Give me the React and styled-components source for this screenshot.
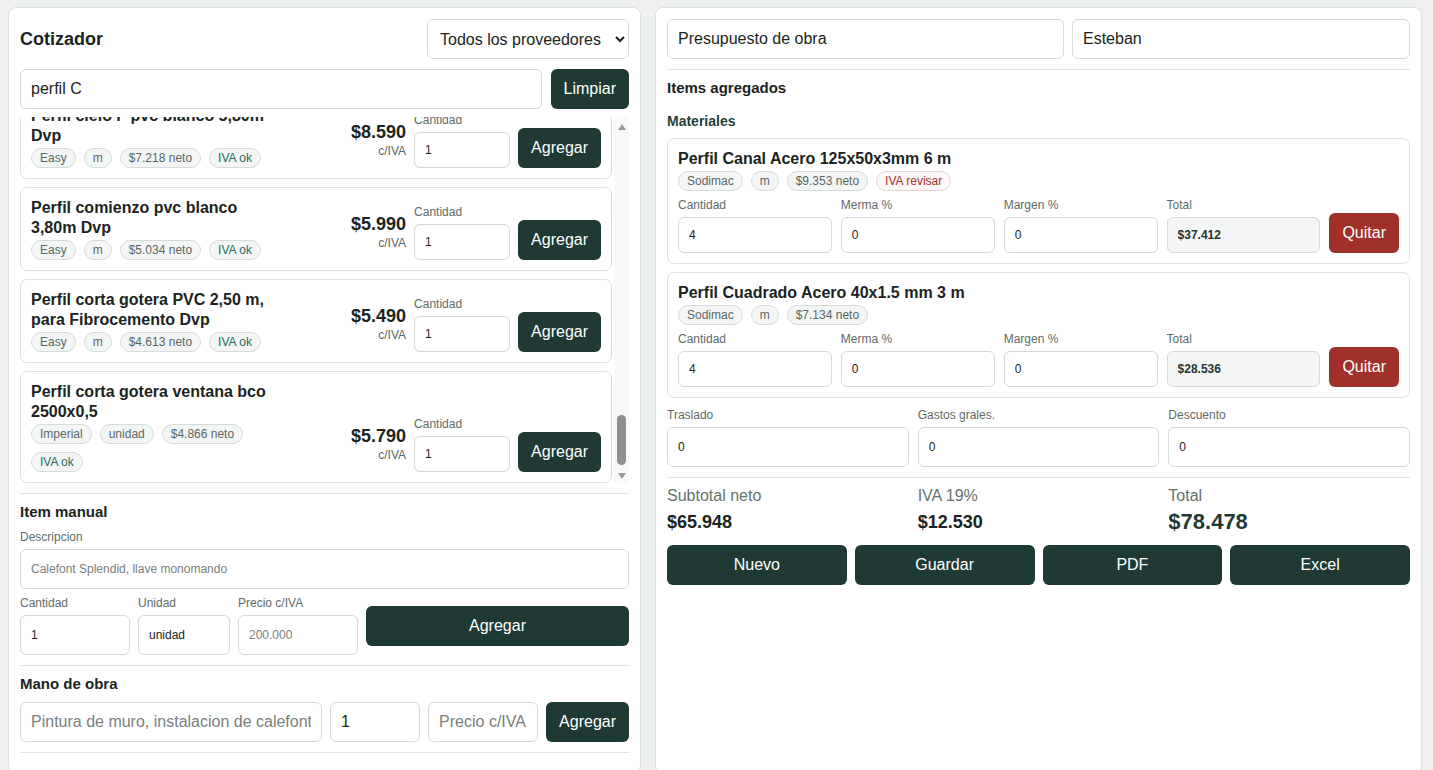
import React, { useLayoutEffect, useRef } from 'react';
import styled, { createGlobalStyle } from 'styled-components';

const GlobalStyle = createGlobalStyle`
  * {
    box-sizing: border-box;
  }
  body {
    margin: 0;
    background: #eef1ef;
    font-family: "Liberation Sans", Arial, sans-serif;
    color: #1b2421;
  }
`;

const Page = styled.div`
  display: grid;
  grid-template-columns: 633px 767px;
  gap: 14px;
  padding: 7px 11px 0 8px;
`;

const Panel = styled.section`
  background: #fff;
  border: 1px solid #dce2df;
  border-radius: 8px;
  padding: 11px;
  display: flex;
  flex-direction: column;
`;

const HeaderRow = styled.div`
  display: flex;
  align-items: center;
  justify-content: space-between;
`;

const Heading = styled.h1`
  margin: 0;
  font-size: 18px;
  font-weight: bold;
  color: #1b2421;
`;

const Select = styled.select`
  width: 202px;
  height: 40px;
  padding: 0 8px;
  font-family: inherit;
  font-size: 16px;
  color: #1b2421;
  background: #fff;
  border: 1px solid #d4dad7;
  border-radius: 6px;
`;

const SearchRow = styled.div`
  display: flex;
  gap: 9px;
  margin-top: 10px;
`;

const Input = styled.input`
  width: 100%;
  height: ${p => (p.$h ? p.$h : 40)}px;
  padding: 0 10px;
  font-family: inherit;
  font-size: ${p => (p.$small ? 12 : 16)}px;
  font-weight: ${p => (p.$bold ? 'bold' : 'normal')};
  color: ${p => (p.$bold ? '#1e3530' : '#1b2421')};
  background: ${p => (p.$readonly ? '#f4f6f5' : '#fff')};
  border: 1px solid #d4dad7;
  border-radius: 6px;
  outline: none;
  &::placeholder {
    color: #7a807d;
  }
`;

const Button = styled.button`
  height: 40px;
  padding: 0 13px;
  flex-shrink: 0;
  font-family: inherit;
  font-size: 16px;
  color: #fff;
  background: ${p => (p.$danger ? '#a0302a' : '#1f3a35')};
  border: none;
  border-radius: 6px;
  cursor: pointer;
`;

const ListWrap = styled.div`
  display: flex;
  gap: 2px;
  height: 366px;
  margin-top: 8px;
`;

const ResultList = styled.div`
  flex: 1;
  min-width: 0;
  overflow-y: auto;
  scrollbar-width: none;
  display: flex;
  flex-direction: column;
  gap: 8px;
  &::-webkit-scrollbar {
    display: none;
  }
`;

const ScrollTrack = styled.div`
  width: 15px;
  flex-shrink: 0;
  display: flex;
  flex-direction: column;
  align-items: center;
  background: #f9f9f9;
`;

const ScrollArrow = styled.div`
  height: ${p => (p.$down ? 14 : 20)}px;
  display: flex;
  align-items: center;
  justify-content: center;
  &::after {
    content: '';
    width: 0;
    height: 0;
    border-left: 4.5px solid transparent;
    border-right: 4.5px solid transparent;
    ${p => (p.$down ? 'border-top' : 'border-bottom')}: 6px solid #9a9a9a;
  }
`;

const ScrollThumb = styled.div`
  margin-top: auto;
  margin-bottom: 4px;
  width: 9px;
  height: 50px;
  border-radius: 5px;
  background: #8f8f8f;
`;

const ResultCard = styled.div`
  flex-shrink: 0;
  display: flex;
  align-items: flex-end;
  gap: 8px;
  padding: 10px;
  border: 1px solid #dce2df;
  border-radius: 7px;
`;

const Info = styled.div`
  flex: 0 0 245px;
  align-self: flex-start;
`;

const ItemTitle = styled.div`
  font-size: 16px;
  font-weight: bold;
  line-height: 20px;
  color: #1b2421;
`;

const Chips = styled.div`
  display: flex;
  flex-wrap: wrap;
  gap: 8px;
  margin-top: 2px;
`;

const toneColor = { ok: '#2a6b5e', bad: '#a1322b' };

const Chip = styled.span`
  font-size: 12px;
  line-height: 18px;
  padding: 0 8px;
  border-radius: 10px;
  color: ${p => toneColor[p.$tone] || '#5b6762'};
  background: ${p => (p.$tone === 'bad' ? '#fdf8f7' : '#f3f6f4')};
  border: 1px solid ${p => (p.$tone === 'bad' ? '#e8d4d1' : '#d5dcd8')};
`;

const PriceBlock = styled.div`
  margin-left: auto;
  margin-bottom: 9px;
  text-align: right;
`;

const Price = styled.div`
  font-size: 18px;
  font-weight: bold;
  line-height: 22px;
  color: #1b2421;
`;

const PriceNote = styled.div`
  font-size: 12px;
  line-height: 16px;
  color: #5b6762;
`;

const Field = styled.div`
  display: flex;
  flex-direction: column;
  width: ${p => (p.$w ? `${p.$w}px` : 'auto')};
  min-width: 0;
`;

const Label = styled.label`
  font-size: 12px;
  line-height: 14px;
  color: #5f6b66;
  margin-bottom: 5px;
`;

const Divider = styled.hr`
  width: 100%;
  height: 1px;
  margin: 10px 0 9px;
  border: none;
  background: #dde3e0;
`;

const SectionTitle = styled.h2`
  margin: 0 0 9px;
  font-size: 15px;
  font-weight: bold;
  line-height: 18px;
  color: #1b2421;
`;

const SubTitle = styled.h3`
  margin: 6px 0 8px;
  font-size: 14px;
  font-weight: bold;
  line-height: 18px;
  color: #23413a;
`;

const ManualRow = styled.div`
  display: grid;
  grid-template-columns: 110px 92px 120px 1fr;
  gap: 8px;
  align-items: center;
  margin-top: 7px;
`;

const LaborRow = styled.div`
  display: grid;
  grid-template-columns: 1fr 90px 110px auto;
  gap: 8px;
`;

const TopInputs = styled.div`
  display: grid;
  grid-template-columns: 397px 1fr;
  gap: 8px;
`;

const AddedList = styled.div`
  display: flex;
  flex-direction: column;
  gap: 8px;
`;

const AddedCard = styled.div`
  padding: 10px;
  border: 1px solid #dce2df;
  border-radius: 7px;
`;

const AddedGrid = styled.div`
  display: grid;
  grid-template-columns: 1fr 1fr 1fr 1fr auto;
  gap: 9px;
  align-items: end;
  margin-top: 7px;
`;

const ThreeCols = styled.div`
  display: grid;
  grid-template-columns: repeat(3, 1fr);
  gap: 9px;
  margin-top: ${p => (p.$mt ? p.$mt : 0)}px;
`;

const SummaryLabel = styled.div`
  font-size: 16px;
  line-height: 18px;
  color: #66726d;
`;

const SummaryValue = styled.div`
  margin-top: 4px;
  font-size: ${p => (p.$big ? 22 : 18)}px;
  font-weight: bold;
  line-height: 26px;
  color: ${p => (p.$big ? '#1f3a35' : '#1b2421')};
`;

const Actions = styled.div`
  display: grid;
  grid-template-columns: repeat(4, 1fr);
  gap: 8px;
  margin-top: 10px;
`;

const filler = [
  ['Perfil C galvanizado 40x38x0,5mm 2,4 m', 'Easy', 'm', '$1.840', '$2.190'],
  ['Perfil C metalcon 60x38x0,85mm 3 m', 'Sodimac', 'unidad', '$3.773', '$4.490'],
  ['Perfil canal U 42x20x0,5mm 2,4 m', 'Imperial', 'unidad', '$1.503', '$1.790'],
  ['Perfil C 90x38x0,85mm 6 m galvanizado', 'Sodimac', 'unidad', '$8.395', '$9.990'],
  ['Perfil omega 35x15x0,5mm 2,4 m', 'Easy', 'm', '$1.168', '$1.390'],
  ['Perfil C 100x50x2mm 6 m acero negro', 'Imperial', 'unidad', '$14.277', '$16.990'],
  ['Perfil angulo aluminio 20x20mm 3 m', 'Easy', 'm', '$3.016', '$3.590'],
  ['Perfil C 150x50x3mm 6 m acero', 'Sodimac', 'm', '$21.840', '$25.990'],
  ['Perfil esquinero metalico 30x30mm 2,4 m', 'Imperial', 'unidad', '$1.000', '$1.190'],
  ['Perfil tapa pvc blanco 6 m Dvp', 'Easy', 'm', '$2.344', '$2.790'],
  ['Perfil H union pvc blanco 5,80m Dvp', 'Easy', 'm', '$3.352', '$3.990'],
  ['Perfil C 80x40x2mm 6 m galvanizado', 'Sodimac', 'unidad', '$11.756', '$13.990'],
  ['Perfil U aluminio 15x15mm 3 m natural', 'Imperial', 'unidad', '$2.680', '$3.190'],
  ['Perfil cuadrado acero 30x1.5 mm 6 m', 'Sodimac', 'm', '$6.714', '$7.990'],
  ['Perfil terminacion pvc blanco 3 m Dvp', 'Easy', 'm', '$1.504', '$1.790'],
  ['Perfil C galvanizado 60x38x0,5mm 2,4 m', 'Imperial', 'unidad', '$2.092', '$2.490'],
  ['Perfil rectangular acero 40x20x2mm 6 m', 'Sodimac', 'm', '$9.235', '$10.990'],
  ['Perfil J pvc blanco 3,80m Dvp', 'Easy', 'm', '$2.000', '$2.380'],
  ['Perfil cielo americano 3,05m blanco', 'Imperial', 'unidad', '$1.672', '$1.990'],
  ['Perfil C 125x50x2mm 6 m acero', 'Sodimac', 'm', '$16.798', '$19.990'],
  ['Perfil canal galvanizado 62x25x0,5mm 3 m', 'Easy', 'unidad', '$2.512', '$2.990'],
  ['Perfil L pvc blanco 6 m Dvp', 'Easy', 'm', '$2.176', '$2.590'],
];

const results = [
  ...filler.map(([name, store, unit, neto, price]) => ({ name, store, unit, neto, price })),
  { name: 'Perfil cielo F pvc blanco 5,80m Dvp', store: 'Easy', unit: 'm', neto: '$7.218', price: '$8.590' },
  { name: 'Perfil comienzo pvc blanco 3,80m Dvp', store: 'Easy', unit: 'm', neto: '$5.034', price: '$5.990' },
  { name: 'Perfil corta gotera PVC 2,50 m, para Fibrocemento Dvp', store: 'Easy', unit: 'm', neto: '$4.613', price: '$5.490' },
  { name: 'Perfil corta gotera ventana bco 2500x0,5', store: 'Imperial', unit: 'unidad', neto: '$4.866', price: '$5.790' },
];

const added = [
  { name: 'Perfil Canal Acero 125x50x3mm 6 m', neto: '$9.353', review: true, total: '$37.412' },
  { name: 'Perfil Cuadrado Acero 40x1.5 mm 3 m', neto: '$7.134', review: false, total: '$28.536' },
];

function ResultItem({ item }) {
  return (
    <ResultCard>
      <Info>
        <ItemTitle>{item.name}</ItemTitle>
        <Chips>
          <Chip>{item.store}</Chip>
          <Chip>{item.unit}</Chip>
          <Chip>{item.neto} neto</Chip>
          <Chip $tone="ok">IVA ok</Chip>
        </Chips>
      </Info>
      <PriceBlock>
        <Price>{item.price}</Price>
        <PriceNote>c/IVA</PriceNote>
      </PriceBlock>
      <Field $w={96}>
        <Label>Cantidad</Label>
        <Input $h={36} $small defaultValue="1" />
      </Field>
      <Button>Agregar</Button>
    </ResultCard>
  );
}

function AddedItem({ item }) {
  return (
    <AddedCard>
      <ItemTitle>{item.name}</ItemTitle>
      <Chips>
        <Chip>Sodimac</Chip>
        <Chip>m</Chip>
        <Chip>{item.neto} neto</Chip>
        {item.review && <Chip $tone="bad">IVA revisar</Chip>}
      </Chips>
      <AddedGrid>
        <Field>
          <Label>Cantidad</Label>
          <Input $h={36} $small defaultValue="4" />
        </Field>
        <Field>
          <Label>Merma %</Label>
          <Input $h={36} $small defaultValue="0" />
        </Field>
        <Field>
          <Label>Margen %</Label>
          <Input $h={36} $small defaultValue="0" />
        </Field>
        <Field>
          <Label>Total</Label>
          <Input $h={36} $small $bold $readonly readOnly value={item.total} />
        </Field>
        <Button $danger>Quitar</Button>
      </AddedGrid>
    </AddedCard>
  );
}

export default function App() {
  const listRef = useRef(null);

  useLayoutEffect(() => {
    if (listRef.current) listRef.current.scrollTop = listRef.current.scrollHeight;
  }, []);

  return (
    <>
      <GlobalStyle />
      <Page>
        <Panel>
          <HeaderRow>
            <Heading>Cotizador</Heading>
            <Select defaultValue="all">
              <option value="all">Todos los proveedores</option>
              <option value="easy">Easy</option>
              <option value="sodimac">Sodimac</option>
              <option value="imperial">Imperial</option>
            </Select>
          </HeaderRow>
          <SearchRow>
            <Input defaultValue="perfil C" />
            <Button>Limpiar</Button>
          </SearchRow>
          <ListWrap>
            <ResultList ref={listRef}>
              {results.map((item, i) => (
                <ResultItem key={i} item={item} />
              ))}
            </ResultList>
            <ScrollTrack>
              <ScrollArrow />
              <ScrollThumb />
              <ScrollArrow $down />
            </ScrollTrack>
          </ListWrap>

          <Divider />
          <SectionTitle>Item manual</SectionTitle>
          <Field>
            <Label>Descripcion</Label>
            <Input $small placeholder="Calefont Splendid, llave monomando" />
          </Field>
          <ManualRow>
            <Field>
              <Label>Cantidad</Label>
              <Input $small defaultValue="1" />
            </Field>
            <Field>
              <Label>Unidad</Label>
              <Input $small defaultValue="unidad" />
            </Field>
            <Field>
              <Label>Precio c/IVA</Label>
              <Input $small placeholder="200.000" />
            </Field>
            <Button>Agregar</Button>
          </ManualRow>

          <Divider />
          <SectionTitle>Mano de obra</SectionTitle>
          <LaborRow>
            <Input placeholder="Pintura de muro, instalacion de calefont" />
            <Input defaultValue="1" />
            <Input placeholder="Precio c/IVA" />
            <Button>Agregar</Button>
          </LaborRow>
          <Divider />
        </Panel>

        <Panel>
          <TopInputs>
            <Input defaultValue="Presupuesto de obra" />
            <Input defaultValue="Esteban" />
          </TopInputs>
          <Divider />
          <SectionTitle>Items agregados</SectionTitle>
          <SubTitle>Materiales</SubTitle>
          <AddedList>
            {added.map((item, i) => (
              <AddedItem key={i} item={item} />
            ))}
          </AddedList>

          <ThreeCols $mt={10}>
            <Field>
              <Label>Traslado</Label>
              <Input $small defaultValue="0" />
            </Field>
            <Field>
              <Label>Gastos grales.</Label>
              <Input $small defaultValue="0" />
            </Field>
            <Field>
              <Label>Descuento</Label>
              <Input $small defaultValue="0" />
            </Field>
          </ThreeCols>
          <Divider />
          <ThreeCols>
            <div>
              <SummaryLabel>Subtotal neto</SummaryLabel>
              <SummaryValue>$65.948</SummaryValue>
            </div>
            <div>
              <SummaryLabel>IVA 19%</SummaryLabel>
              <SummaryValue>$12.530</SummaryValue>
            </div>
            <div>
              <SummaryLabel>Total</SummaryLabel>
              <SummaryValue $big>$78.478</SummaryValue>
            </div>
          </ThreeCols>
          <Actions>
            <Button>Nuevo</Button>
            <Button>Guardar</Button>
            <Button>PDF</Button>
            <Button>Excel</Button>
          </Actions>
        </Panel>
      </Page>
    </>
  );
}
